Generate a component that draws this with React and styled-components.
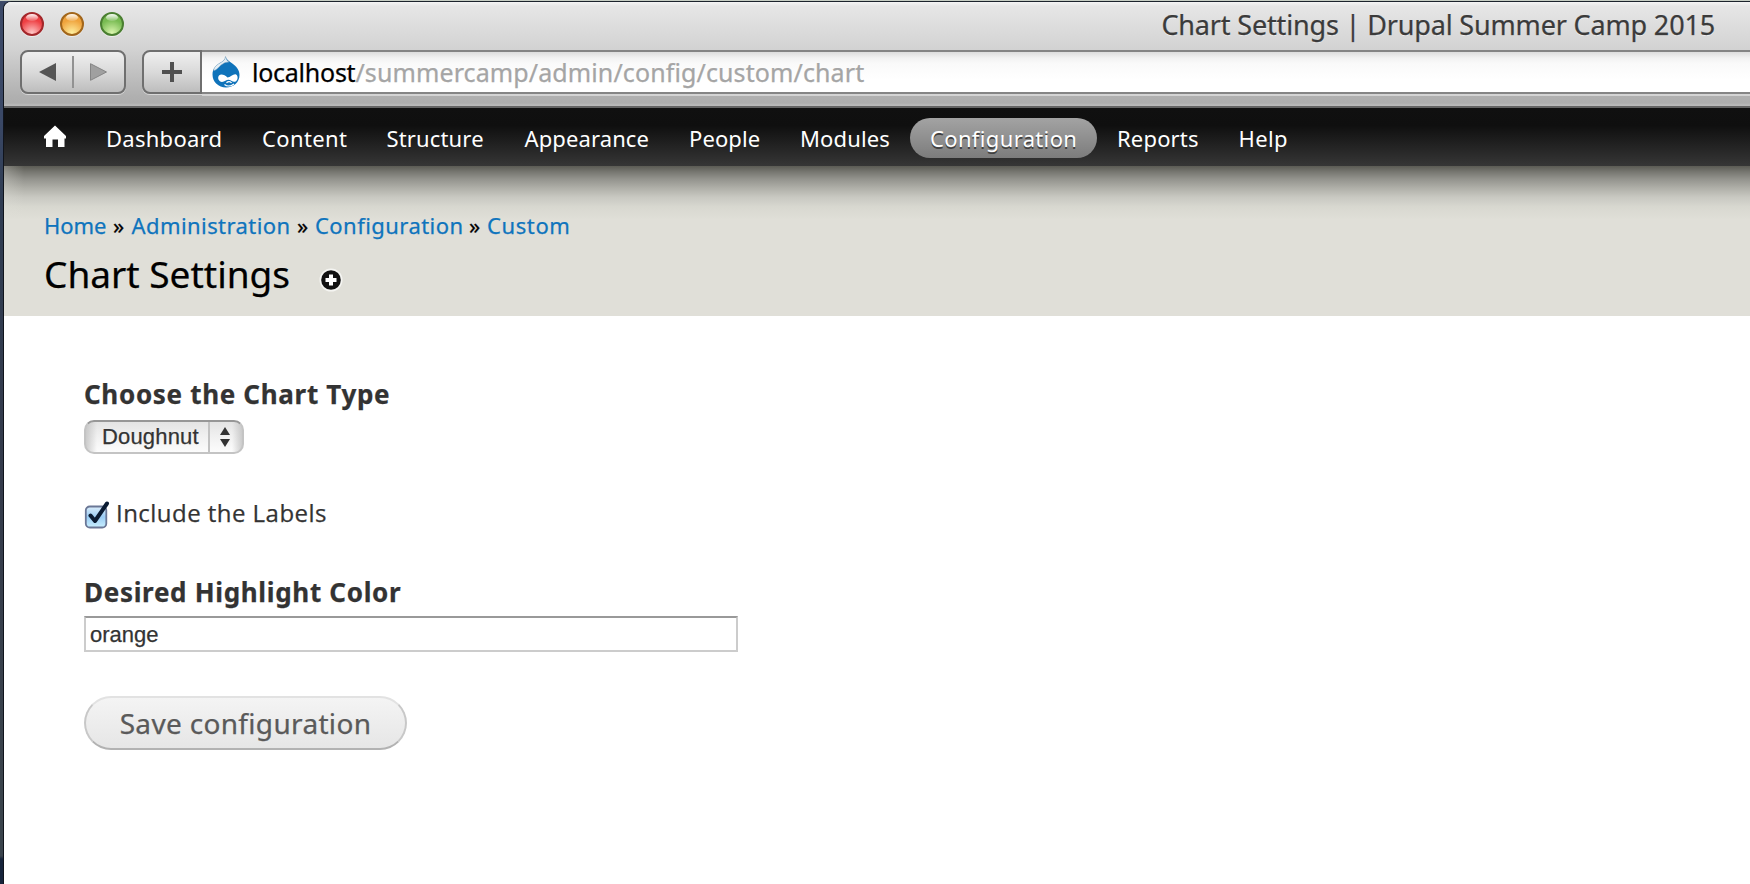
import React from "react";
import styled, { createGlobalStyle } from "styled-components";

const GlobalStyle = createGlobalStyle`
  *, *::before, *::after { box-sizing: border-box; }
  html, body, #root { height: 100%; }
  body {
    margin: 0;
    overflow: hidden;
    background: #fff;
    font-family: "Noto Sans", "Open Sans", sans-serif;
    font-variant-ligatures: none;
    -webkit-text-stroke: 0.25px currentColor;
    color: #333;
  }
`;

const Desktop = styled.div`
  display: flex;
  width: 1750px;
  height: 884px;
  overflow: hidden;
  border-top: 1px solid #c6cdc3;
  background: linear-gradient(#3d4a68 0, #3a4866 120px, #2f3c52 200px, #343b4b 480px, #3a434c 780px, #3a434c 855px, #17243b 858px);
`;

const Window = styled.div`
  display: flex;
  flex-direction: column;
  flex: 1;
  margin-left: 3px;
  border-left: 1px solid #10141c;
  border-top: 1px solid #1c232c;
  border-top-left-radius: 8px;
  overflow: hidden;
  background: #fff;
`;

const Chrome = styled.header`
  height: 106px;
  border-bottom: 2px solid #646464;
  background: linear-gradient(#f4f4f4 0, #e6e6e6 4px, #d3d3d3 46px, #b0b0b0 94px, #adadad 101px, #b9b9b9 103px);
`;

const TitleBar = styled.div`
  display: flex;
  align-items: center;
  justify-content: space-between;
  height: 43px;
  padding: 0 35px 0 16px;
`;

const Lights = styled.div`
  display: flex;
  gap: 16px;
  padding-top: 1px;
`;

const Light = styled.span`
  position: relative;
  width: 24px;
  height: 24px;
  border: 2px solid ${(p) => p.$edge};
  border-radius: 50%;
  background: radial-gradient(circle at 50% 95%, ${(p) => p.$glow} 0, ${(p) => p.$color} 62%);
  box-shadow: 0 1px 0 rgba(255, 255, 255, 0.55);

  &::before {
    content: "";
    position: absolute;
    left: 4px;
    top: 0;
    width: 12px;
    height: 7px;
    border-radius: 50%;
    background: linear-gradient(rgba(255, 255, 255, 0.95), rgba(255, 255, 255, 0.15));
  }
`;

const WindowTitle = styled.div`
  padding-top: 1px;
  font-size: 27px;
  line-height: 43px;
  letter-spacing: -0.16px;
  white-space: nowrap;
  color: #3b3b3b;
  text-shadow: 0 1px 0 rgba(255, 255, 255, 0.6);
`;

const Controls = styled.div`
  display: flex;
  height: 44px;
  margin-top: 5px;
  padding-left: 16px;
`;

const ButtonPair = styled.div`
  display: flex;
  align-items: center;
  justify-content: space-between;
  width: 106px;
  margin-right: 16px;
  padding: 0 17px;
  border: 2px solid #6f6f6f;
  border-radius: 8px;
  background: linear-gradient(#efefef, #dadada 50%, #bdbdbd);
  box-shadow: 0 1px 0 rgba(255, 255, 255, 0.5);
`;

const PairDivider = styled.span`
  width: 2px;
  height: 32px;
  background: #929292;
`;

const AddButton = styled.div`
  display: flex;
  align-items: center;
  justify-content: center;
  width: 60px;
  border: 2px solid #6f6f6f;
  border-radius: 8px 0 0 8px;
  background: linear-gradient(#efefef, #dadada 50%, #bdbdbd);
  box-shadow: 0 1px 0 rgba(255, 255, 255, 0.5);
`;

const AddressField = styled.div`
  display: flex;
  align-items: center;
  flex: 1;
  padding-left: 10px;
  border: solid #858585;
  border-width: 2px 0;
  background: linear-gradient(#dedede 0, #f3f3f3 6px, #fafafa 12px, #fff 70%);
  box-shadow: 0 2px 0 rgba(255, 255, 255, 0.45);
`;

const Address = styled.div`
  display: flex;
  padding-left: 12px;
  font-size: 25px;
  line-height: 40px;
  white-space: nowrap;
`;

const Host = styled.span`
  letter-spacing: -0.25px;
  color: #000;
`;

const Path = styled.span`
  letter-spacing: 0.11px;
  color: #a5a5a5;
`;

const AdminBar = styled.nav`
  display: flex;
  align-items: center;
  height: 58px;
  padding: 2px 0 0 40px;
  background: linear-gradient(#101010 0, #0f0f0f 30%, #363636 100%);
`;

const HomeLink = styled.a`
  display: flex;
  width: 42px;
  margin-bottom: 5px;
`;

const NavItem = styled.a`
  width: ${(p) => p.$width}px;
  height: 40px;
  padding-left: 20px;
  border-radius: 20px;
  font-size: 22px;
  line-height: 40px;
  letter-spacing: ${(p) => p.$spacing}px;
  white-space: nowrap;
  color: #fff;
  -webkit-text-stroke: 0;
  ${(p) => p.$active && `
    background: linear-gradient(#a3a3a3, #7c7c7c);
    text-shadow: 0 2px 0 #404040;
  `}
`;

const PageHead = styled.section`
  height: 150px;
  padding: 45px 0 0 40px;
  background:
    linear-gradient(to right, rgba(224, 223, 216, 0.3), rgba(224, 223, 216, 0) 20px) 0 0 / 100% 50px no-repeat,
    linear-gradient(#5b5b54 0, #777771 6px, #93938d 13px, #afafa8 22px, #c8c8c1 31px, #d8d8d0 41px, #e0dfd8 54px);
`;

const Breadcrumb = styled.div`
  display: flex;
  font-size: 22px;
  line-height: 28px;
  color: #000;
`;

const Crumb = styled.a`
  width: ${(p) => p.$width}px;
  letter-spacing: ${(p) => p.$spacing}px;
  white-space: nowrap;
  color: #0f74bd;
`;

const Separator = styled.span`
  width: ${(p) => p.$width}px;
`;

const HeadingRow = styled.div`
  display: flex;
  align-items: center;
  height: 52px;
  margin-top: 9px;
`;

const Heading = styled.h1`
  width: 275px;
  margin: 0;
  font-size: 37px;
  font-weight: 400;
  line-height: 52px;
  white-space: nowrap;
  color: #000;
`;

const ShortcutIcon = styled.svg`
  margin-top: 12px;
`;

const Form = styled.form`
  display: flex;
  flex-direction: column;
  align-items: flex-start;
  padding: 62px 80px 0;
`;

const FieldLabel = styled.label`
  font-size: 26px;
  font-weight: 700;
  line-height: 32px;
  letter-spacing: 0.68px;
  white-space: nowrap;
`;

const Select = styled.div`
  display: flex;
  width: 160px;
  height: 34px;
  margin-top: 10px;
  border: 2px solid #c4c4c4;
  border-top-color: #979797;
  border-radius: 10px;
  background:
    linear-gradient(to right, rgba(190, 190, 190, 0.75), rgba(255, 255, 255, 0) 11px, rgba(255, 255, 255, 0) 146px, rgba(190, 190, 190, 0.75)),
    linear-gradient(#e4e4e4, #f0f0f0 45%, #fcfcfc);
  font-family: "Liberation Sans", Arial, sans-serif;
  font-size: 22px;
  line-height: 30px;
  letter-spacing: 0.17px;
`;

const SelectValue = styled.span`
  width: 124px;
  padding-left: 16px;
  border-right: 2px solid #c2c2c2;
`;

const SelectArrows = styled.svg`
  margin: 5px 0 0 10px;
`;

const CheckRow = styled.label`
  display: flex;
  height: 32px;
  margin-top: 42px;
  font-family: "Open Sans", "Noto Sans", sans-serif;
  font-size: 24px;
  line-height: 34px;
  letter-spacing: 0.46px;
  white-space: nowrap;
`;

const CheckGraphic = styled.svg`
  margin: 2px 2px 0 0;
`;

const ColorLabel = styled(FieldLabel)`
  margin-top: 48px;
`;

const TextInput = styled.input`
  width: 654px;
  height: 36px;
  margin-top: 8px;
  padding: 2px 4px 0;
  border: 2px solid #ccc;
  border-top-color: #999;
  outline: none;
  background: #fff;
  font-family: "Liberation Sans", Arial, sans-serif;
  font-size: 22px;
  letter-spacing: 0;
  color: #333;
`;

const SaveButton = styled.button`
  width: 323px;
  height: 54px;
  margin-top: 44px;
  padding: 0;
  border: 2px solid;
  border-color: #e2e2e2 #c8c8c8 #b2b2b2;
  border-radius: 27px;
  background: linear-gradient(#f4f4f4, #e6e6e6);
  font-family: inherit;
  font-size: 28px;
  line-height: 50px;
  letter-spacing: 0.33px;
  white-space: nowrap;
  color: #5a5a5a;
`;

const NAV = [
  { label: "Dashboard", width: 156, spacing: 0.27 },
  { label: "Content", width: 124.5, spacing: 0.39 },
  { label: "Structure", width: 138, spacing: 0.15 },
  { label: "Appearance", width: 164.5, spacing: 0.11 },
  { label: "People", width: 111, spacing: 0.09 },
  { label: "Modules", width: 130, spacing: 0.15 },
  { label: "Configuration", width: 187, spacing: 0.35, active: true },
  { label: "Reports", width: 121.5, spacing: 0.17 },
  { label: "Help", width: 90, spacing: 0.4 },
];

const CRUMBS = [
  { label: "Home", width: 69, spacing: -0.1, gap: 18.5 },
  { label: "Administration", width: 165.5, spacing: 0.42, gap: 18 },
  { label: "Configuration", width: 154, spacing: 0.45, gap: 18 },
  { label: "Custom", width: 90, spacing: 0.6 },
];

const DrupalIcon = () => (
  <svg width="28" height="32" viewBox="0 0 28 32">
    <path d="M13.5 0.5C14.5 4 17 5 20 7.3C24.5 10.5 27.5 14 27.5 19C27.5 26.5 21.5 31.5 14 31.5C6.5 31.5 0.5 26 0.5 18.5C0.5 13 4 9.5 8 7C11.5 5 13 4 13.5 0.5Z" fill="#0f73ba" />
    <path d="M13.5 0.5C14.5 4 15.5 5 17 6C12 6 9 9 6 12C4 14 2 15 1.5 14C2.5 10.5 5 8.8 8 7C11.5 5 13 4 13.5 0.5Z" fill="#e4eef5" stroke="#7fa3bb" strokeWidth="0.5" />
    <path d="M15.5 21.5C13 19 9 17.5 7 19.5C5 22 7 26 10 26C12.5 26 14.5 23.8 16.5 23.8C18.5 23.8 20.5 26.3 23 25.8C26.3 24.5 26.3 19.5 24 18.5C21.5 17.5 18.5 21.5 15.5 21.5Z" fill="#fff" />
    <path d="M12.5 28.5C15 30.5 19 30.5 22 28M14.5 26.8C16 25.3 18.5 25.3 19.5 27" stroke="#fff" strokeWidth="1.3" fill="none" />
  </svg>
);

const HomeIcon = () => (
  <svg width="22" height="22" viewBox="0 0 22 22">
    <path d="M11 0.5L22 11V13.5H20.5V22H14V14.5H8.5V22H2V13.5H0V11Z" fill="#fff" />
  </svg>
);

export default function App() {
  return (
    <>
      <GlobalStyle />
      <Desktop>
        <Window>
          <Chrome>
            <TitleBar>
              <Lights>
                <Light $color="#ee3f43" $glow="#ffc9c8" $edge="#a3272b" />
                <Light $color="#efa33c" $glow="#fff0a0" $edge="#a2661b" />
                <Light $color="#78bb52" $glow="#dcf7b0" $edge="#4a7f31" />
              </Lights>
              <WindowTitle>Chart Settings | Drupal Summer Camp 2015</WindowTitle>
            </TitleBar>
            <Controls>
              <ButtonPair>
                <svg width="17" height="18" viewBox="0 0 17 18">
                  <path d="M0 9L17 0V18Z" fill="#555" />
                </svg>
                <PairDivider />
                <svg width="17" height="18" viewBox="0 0 17 18">
                  <path d="M16.5 9L0.5 0.7V17.3Z" fill="#a0a0a0" stroke="#858585" />
                </svg>
              </ButtonPair>
              <AddButton>
                <svg width="20" height="20" viewBox="0 0 20 20">
                  <path d="M8 0H12V8H20V12H12V20H8V12H0V8H8Z" fill="#505050" />
                </svg>
              </AddButton>
              <AddressField>
                <DrupalIcon />
                <Address>
                  <Host>localhost</Host>
                  <Path>/summercamp/admin/config/custom/chart</Path>
                </Address>
              </AddressField>
            </Controls>
          </Chrome>
          <AdminBar>
            <HomeLink><HomeIcon /></HomeLink>
            {NAV.map((n) => (
              <NavItem key={n.label} $width={n.width} $spacing={n.spacing} $active={n.active}>
                {n.label}
              </NavItem>
            ))}
          </AdminBar>
          <PageHead>
            <Breadcrumb>
              {CRUMBS.map((c) => (
                <React.Fragment key={c.label}>
                  <Crumb $width={c.width} $spacing={c.spacing}>{c.label}</Crumb>
                  {c.gap && <Separator $width={c.gap}>»</Separator>}
                </React.Fragment>
              ))}
            </Breadcrumb>
            <HeadingRow>
              <Heading>Chart Settings</Heading>
              <ShortcutIcon width="24" height="24" viewBox="0 0 24 24">
                <circle cx="12" cy="12" r="11.5" fill="#f5f5f2" />
                <circle cx="12" cy="12" r="9.8" fill="#111" />
                <path d="M10 6.5H14V10H17.5V14H14V17.5H10V14H6.5V10H10Z" fill="#fff" />
              </ShortcutIcon>
            </HeadingRow>
          </PageHead>
          <Form>
            <FieldLabel>Choose the Chart Type</FieldLabel>
            <Select>
              <SelectValue>Doughnut</SelectValue>
              <SelectArrows width="10" height="20" viewBox="0 0 10 20">
                <path d="M5 0L10 8H0ZM5 20L10 12H0Z" fill="#333" />
              </SelectArrows>
            </Select>
            <CheckRow>
              <CheckGraphic width="30" height="32" viewBox="0 0 30 32">
                <defs>
                  <linearGradient id="boxFill" x1="0" y1="0" x2="0" y2="1">
                    <stop offset="0" stopColor="#dceefb" />
                    <stop offset="0.5" stopColor="#9accf4" />
                    <stop offset="1" stopColor="#c9f0ff" />
                  </linearGradient>
                </defs>
                <rect x="1.8" y="8.5" width="20.5" height="21" rx="4" fill="url(#boxFill)" stroke="#6a7796" strokeWidth="1.8" />
                <path d="M6.5 17.5L11 23L23 5.5" fill="none" stroke="#0b1c33" strokeWidth="4" strokeLinecap="round" strokeLinejoin="round" />
              </CheckGraphic>
              Include the Labels
            </CheckRow>
            <ColorLabel>Desired Highlight Color</ColorLabel>
            <TextInput defaultValue="orange" />
            <SaveButton type="button">Save configuration</SaveButton>
          </Form>
        </Window>
      </Desktop>
    </>
  );
}
